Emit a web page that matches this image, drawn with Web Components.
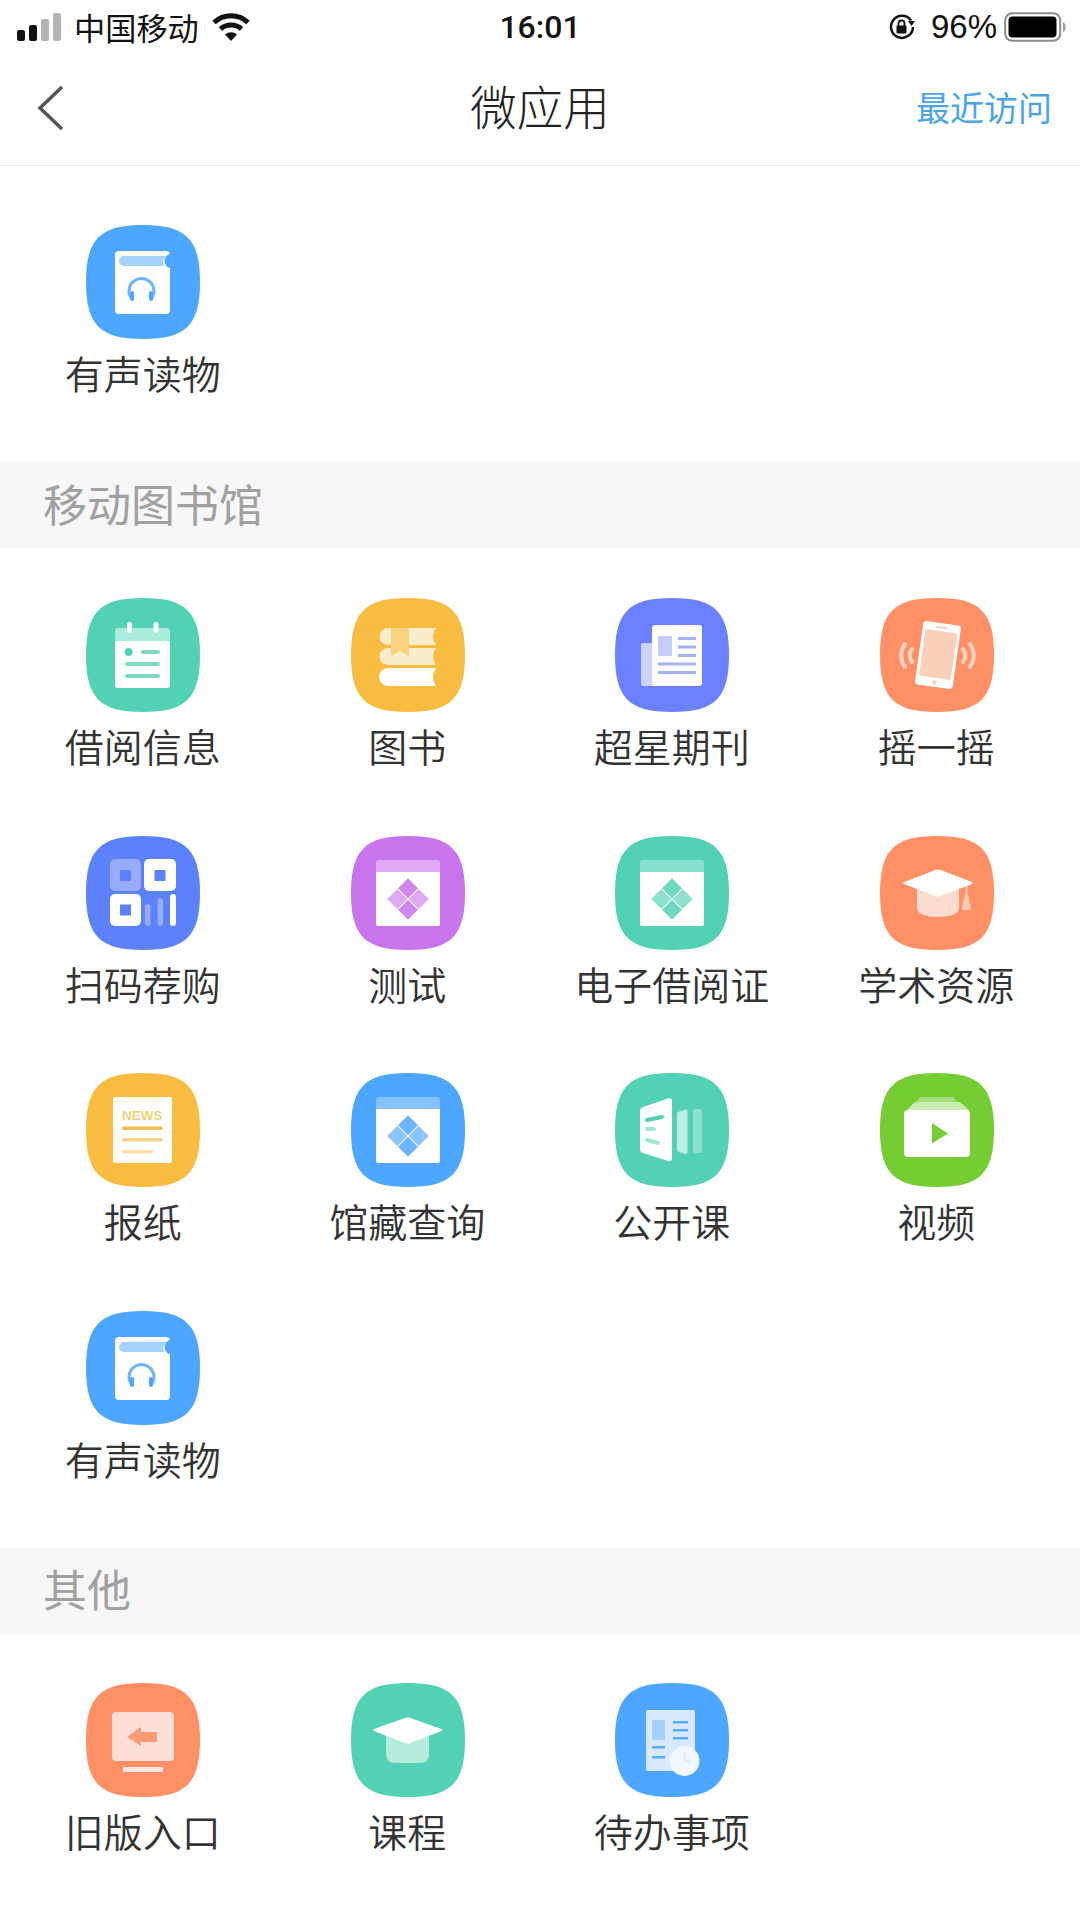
<!DOCTYPE html>
<html lang="zh">
<head>
<meta charset="utf-8">
<title>微应用</title>
<style>
  html, body { margin: 0; padding: 0; background: #fff; }
  body { width: 1080px; font-family: "Noto Sans CJK SC", "Noto Sans", sans-serif; }
</style>
</head>
<body>
<phone-status-bar carrier="中国移动" time="16:01" battery="96%"></phone-status-bar>
<nav-bar heading="微应用" action="最近访问"></nav-bar>

<tile-grid first>
  <app-tile icon="audio">有声读物</app-tile>
</tile-grid>

<section-title>移动图书馆</section-title>
<tile-grid>
  <app-tile icon="calendar">借阅信息</app-tile>
  <app-tile icon="books">图书</app-tile>
  <app-tile icon="journal">超星期刊</app-tile>
  <app-tile icon="shake">摇一摇</app-tile>
  <app-tile icon="qr">扫码荐购</app-tile>
  <app-tile icon="windowPurple">测试</app-tile>
  <app-tile icon="windowTeal">电子借阅证</app-tile>
  <app-tile icon="academic">学术资源</app-tile>
  <app-tile icon="news">报纸</app-tile>
  <app-tile icon="windowBlue">馆藏查询</app-tile>
  <app-tile icon="open">公开课</app-tile>
  <app-tile icon="video">视频</app-tile>
  <app-tile icon="audio">有声读物</app-tile>
</tile-grid>

<section-title>其他</section-title>
<tile-grid>
  <app-tile icon="legacy">旧版入口</app-tile>
  <app-tile icon="course">课程</app-tile>
  <app-tile icon="todo">待办事项</app-tile>
</tile-grid>

<script>
const BLUE = '#4da6ff'
const TEAL = '#52d1b4'
const YELLOW = '#f8bc41'
const INDIGO = '#6b80ff'
const ORANGE = '#ff8f65'
const ROYAL = '#5b82fb'
const PURPLE = '#c874ec'
const GREEN = '#76cc33'

const diamond = (cx, cy, fill) =>
  `<path d="M${cx} ${cy - 10}l10 10-10 10-10-10z" fill="${fill}"/>`

// app window with a four part diamond, used three times in different colours
const windowIcon = (base, band, dark, light) => ({
  color: base,
  art: `
    <path d="M25 36V27a3 3 0 0 1 3-3h58a3 3 0 0 1 3 3v9z" fill="${band}"/>
    <path d="M25 36h64v52a2 2 0 0 1-2 2H27a2 2 0 0 1-2-2z" fill="#fff"/>
    ${diamond(57, 52.3, dark)}
    ${diamond(57, 73.7, dark)}
    ${diamond(46.3, 63, light)}
    ${diamond(67.7, 63, light)}`
})

const ICONS = {
  audio: {
    color: BLUE,
    art: `
      <rect x="29" y="26" width="55" height="63" rx="4" fill="#fff"/>
      <circle cx="86" cy="36" r="7.500" fill="${BLUE}"/>
      <path d="M38 31h42l-3 5 1 5H38a5 5 0 0 1 0-10z" fill="#a5d2ff"/>
      <path d="M46 74a12.500 12.500 0 1 1 19 0" fill="none" stroke="#6fb6ff" stroke-width="3"/>
      <rect x="44" y="66" width="4" height="10" rx="2" fill="#4da6ff"/>
      <rect x="63" y="66" width="4" height="10" rx="2" fill="#4da6ff"/>`
  },
  calendar: {
    color: TEAL,
    art: `
      <path d="M29 43V33a3 3 0 0 1 3-3h49a3 3 0 0 1 3 3v10z" fill="#a8ecdb"/>
      <path d="M29 43h55v44a3 3 0 0 1-3 3H32a3 3 0 0 1-3-3z" fill="#fff"/>
      <rect x="41" y="24" width="5" height="11" rx="2.500" fill="#fff"/>
      <rect x="67.500" y="24" width="5" height="11" rx="2.500" fill="#fff"/>
      <circle cx="42.500" cy="54" r="4" fill="${TEAL}"/>
      <rect x="55" y="52" width="19" height="4" rx="2" fill="#7fd9c2"/>
      <rect x="39" y="64" width="35" height="4" rx="2" fill="#7fd9c2"/>
      <rect x="39" y="76" width="35" height="4" rx="2" fill="#7fd9c2"/>`
  },
  books: {
    color: YELLOW,
    art: `
      <path d="M37 30h48q-6 8.500 0 17H37a8.500 8.500 0 0 1 0-17z" fill="#fbeccb"/>
      <path d="M37 50h48q-6 8.500 0 17H37a8.500 8.500 0 0 1 0-17z" fill="#fbeccb"/>
      <path d="M37 70h48q-6 9 0 18H37a9 9 0 0 1 0-18z" fill="#fff"/>
      <path d="M40 30h18v28l-9-5-9 5z" fill="#f9d27f"/>`
  },
  journal: {
    color: INDIGO,
    art: `
      <rect x="26" y="45" width="14" height="43" rx="2" fill="#ccd3ff"/>
      <rect x="37" y="27" width="50" height="61" rx="3" fill="#fff"/>
      <rect x="43" y="38" width="14" height="20" fill="#c5cdfc"/>
      <rect x="63" y="39" width="18" height="3" fill="#a5b0f5"/>
      <rect x="63" y="47.500" width="18" height="3" fill="#a5b0f5"/>
      <rect x="63" y="56" width="18" height="3" fill="#a5b0f5"/>
      <rect x="43" y="64.500" width="38" height="3" fill="#a5b0f5"/>
      <rect x="43" y="73" width="38" height="3" fill="#a5b0f5"/>`
  },
  shake: {
    color: ORANGE,
    art: `
      <g transform="rotate(8 58 57)">
        <rect x="39" y="25" width="38" height="64" rx="3" fill="#fff"/>
        <rect x="42" y="33" width="32" height="47" fill="#fbd0bb"/>
        <rect x="52" y="28.500" width="12" height="1.500" fill="#f9c9b2"/>
        <circle cx="58" cy="84.500" r="2" fill="#f9c9b2"/>
      </g>
      <g fill="none" stroke="#fcd3bf" stroke-linecap="round" stroke-width="4">
        <path d="M25 46c-5 7-5 16 0 23"/>
        <path d="M32 51c-3 4-3 9 0 13"/>
        <path d="M90 46c5 7 5 16 0 23"/>
        <path d="M83 51c3 4 3 9 0 13"/>
      </g>`
  },
  qr: {
    color: ROYAL,
    art: `
      <rect x="24" y="23" width="31" height="32" rx="5" fill="#98aafc"/>
      <rect x="34" y="34" width="11" height="11" fill="${ROYAL}"/>
      <rect x="58" y="23" width="32" height="32" rx="5" fill="#fff"/>
      <rect x="68.500" y="34" width="11" height="11" fill="${ROYAL}"/>
      <rect x="24" y="58" width="31" height="32" rx="5" fill="#fff"/>
      <rect x="34" y="68.500" width="11" height="11" fill="${ROYAL}"/>
      <rect x="59" y="68" width="5.500" height="22" rx="2.700" fill="#98aafc"/>
      <rect x="71.500" y="62" width="5.500" height="28" rx="2.700" fill="#98aafc"/>
      <rect x="84" y="58" width="6" height="32" rx="3" fill="#fff"/>`
  },
  windowPurple: windowIcon(PURPLE, '#dfa9f5', '#cf86ee', '#dcaaf3'),
  windowTeal: windowIcon(TEAL, '#88e2cd', '#6fd9c0', '#8ee2cd'),
  windowBlue: windowIcon(BLUE, '#85c2ff', '#6db5fe', '#8cc4ff'),
  academic: {
    color: ORANGE,
    art: `
      <path d="M37 52h42v20c0 6-9 9-21 9s-21-3-21-9z" fill="#fcdccf"/>
      <path d="M56 33.800q2-.8 4 0l32 12.300q2 .9 0 1.800l-32 12.300q-2 .8-4 0L24 47.900q-2-.9 0-1.800z" fill="#fff"/>
      <rect x="85.500" y="50" width="2" height="10" fill="#fcc9b5"/>
      <path d="M85 58h3l3 14a1.500 1.500 0 0 1-1.500 2h-6A1.500 1.500 0 0 1 82 72z" fill="#fcc9b5"/>`
  },
  news: {
    color: YELLOW,
    art: `
      <rect x="27" y="24" width="59" height="66" rx="2" fill="#fff"/>
      <text x="36" y="47" font-family="'Liberation Sans', sans-serif" font-weight="700" font-size="13.500" fill="#f5cf7a">NEWS</text>
      <rect x="36" y="53.500" width="41" height="3.500" rx="1.700" fill="#f6bd50"/>
      <rect x="36" y="65" width="41" height="3.500" rx="1.700" fill="#f8d08a"/>
      <rect x="36" y="77" width="31" height="3.500" rx="1.700" fill="#fadca6"/>`
  },
  open: {
    color: TEAL,
    art: `
      <path d="M28 34l25-8.500q4-1 4 3V85q0 4-4 3l-25-8q-3-1-3-4V38q0-3 3-4z" fill="#fff"/>
      <path d="M32 47l15-3" stroke="${TEAL}" stroke-width="4" stroke-linecap="round" fill="none"/>
      <path d="M32 56h7" stroke="#a3e6d5" stroke-width="4" stroke-linecap="round" fill="none"/>
      <path d="M32 67l11 3" stroke="#a3e6d5" stroke-width="4" stroke-linecap="round" fill="none"/>
      <path d="M62 41q0-2 2-2.500l6-2q2.500-.5 2.500 2V79q0 2.500-2.500 2l-6-2q-2-.5-2-2.500z" fill="#bcefe2"/>
      <path d="M78 38q0-2 2-2h5q2 0 2 2v40q0 2-2 2h-5q-2 0-2-2z" fill="#8fe0cc"/>`
  },
  video: {
    color: GREEN,
    art: `
      <path d="M38 27q.5-3 3-3h31q2.500 0 3 3l5 4H34z" fill="#a5dd7c"/>
      <path d="M26 38l9-9h45l10 9z" fill="#c9ecb0"/>
      <rect x="24" y="37" width="66" height="47" rx="4" fill="#fff"/>
      <path d="M52 50l16 10.500-16 10z" fill="${GREEN}"/>`
  },
  legacy: {
    color: ORANGE,
    art: `
      <rect x="26" y="29" width="62" height="49" rx="4" fill="#fde0d5"/>
      <path d="M41 54l14-10v5h16v10H55v4z" fill="#fc9a75"/>
      <rect x="37" y="84" width="40" height="5" rx="1" fill="#fde9e1"/>`
  },
  course: {
    color: TEAL,
    art: `
      <path d="M35 50h43v21q0 9-9 9H44q-9 0-9-9z" fill="#b5ecdd"/>
      <path d="M54.500 34.800q2-1 4 0l32 11.300q2 .9 0 1.800l-32 12.300q-2 .8-4 0L23 47.900q-2-.9 0-1.800z" fill="#fff"/>`
  },
  todo: {
    color: BLUE,
    art: `
      <rect x="31" y="27" width="49" height="61" rx="2" fill="#d6e9ff"/>
      <rect x="37" y="37" width="13" height="20" rx="1" fill="#a6d1fd"/>
      <rect x="58" y="38" width="15" height="2.500" fill="#5aaeff"/>
      <rect x="58" y="46" width="15" height="2.500" fill="#5aaeff"/>
      <rect x="58" y="54" width="15" height="2.500" fill="#5aaeff"/>
      <rect x="37" y="63" width="13" height="2.500" fill="#5aaeff"/>
      <rect x="37" y="73" width="13" height="2.500" fill="#5aaeff"/>
      <circle cx="69.500" cy="78" r="15" fill="#f1f8ff"/>
      <path d="M69.500 70v8.500h6" fill="none" stroke="#cfe5fb" stroke-width="1.500"/>`
  }
}

class PhoneStatusBar extends HTMLElement {
  connectedCallback() {
    this.attachShadow({ mode: 'open' })
    this.shadowRoot.innerHTML = /*html*/ `
      <style>
        :host {
          display: grid;
          grid-template-columns: 1fr auto 1fr;
          align-items: center;
          height: 50px;
          padding: 2px 14px 0 17px;
          box-sizing: border-box;
          color: #111;
        }
        .left, .right { display: flex; align-items: center; }
        .right { justify-content: flex-end; }
        .carrier { font-size: 31.200px; margin-left: 11px; line-height: 50px; }
        .wifi { margin-left: 13px; }
        .time { font: 500 32px "Roboto", "Liberation Sans", sans-serif; margin-left: -3px; }
        .pct { font: 400 33px "Liberation Sans", sans-serif; margin: 0 7px 0 14px; }
        svg { display: block; }
      </style>
      <div class="left">
        <svg width="46" height="28" viewBox="0 0 46 28">
          <rect x="0" y="17" width="8" height="11" rx="2" fill="#111"/>
          <rect x="12" y="12" width="8" height="16" rx="2" fill="#111"/>
          <rect x="24" y="6" width="8" height="22" rx="2" fill="#b4b4b4"/>
          <rect x="36" y="0" width="8" height="28" rx="2" fill="#b4b4b4"/>
        </svg>
        <span class="carrier">${this.getAttribute('carrier')}</span>
        <svg class="wifi" width="38" height="30" viewBox="0 0 38 30">
          <path d="M2 10.500a25 25 0 0 1 34 0" fill="none" stroke="#111" stroke-width="5"/>
          <path d="M8.500 17a16 16 0 0 1 21 0" fill="none" stroke="#111" stroke-width="5"/>
          <path d="M13 22.500a9 9 0 0 1 12 0L19 29z" fill="#111"/>
        </svg>
      </div>
      <span class="time">${this.getAttribute('time')}</span>
      <div class="right">
        <svg width="30" height="26" viewBox="0 0 30 26">
          <path d="M24 6.500A11 11 0 1 0 26 13" fill="none" stroke="#111" stroke-width="2.500"/>
          <path d="M21 7h7l-3.500 5z" fill="#111"/>
          <rect x="9.500" y="11.500" width="10" height="8" rx="1" fill="#111"/>
          <path d="M11.500 12V9.500a3 3 0 0 1 6 0V12" fill="none" stroke="#111" stroke-width="1.800"/>
        </svg>
        <span class="pct">${this.getAttribute('battery')}</span>
        <svg width="62" height="30" viewBox="0 0 62 30">
          <rect x="1.200" y="1.200" width="55" height="27.600" rx="7" fill="none" stroke="#8c8c8c" stroke-width="2"/>
          <rect x="4.500" y="4.500" width="48" height="21" rx="4" fill="#000"/>
          <path d="M59 10c2 1 2.500 3 2.500 5s-.5 4-2.500 5z" fill="#9a9a9a"/>
        </svg>
      </div>`
  }
}

class NavBar extends HTMLElement {
  connectedCallback() {
    this.attachShadow({ mode: 'open' })
    this.shadowRoot.innerHTML = /*html*/ `
      <style>
        :host {
          display: grid;
          grid-template-columns: 1fr auto 1fr;
          align-items: center;
          height: 116px;
          padding: 0 28px;
          box-sizing: border-box;
          border-bottom: 1px solid #e8e8e8;
        }
        svg { display: block; margin-left: 8px; }
        h1 { margin: 0 0 5px; font-size: 46.500px; font-weight: 300; color: #222; line-height: 106px; }
        a { justify-self: end; font-size: 34px; color: #4aa5e8; margin-bottom: 3px; }
      </style>
      <svg width="28" height="46" viewBox="0 0 28 46">
        <path d="M26 2L4 23l22 21" fill="none" stroke="#555" stroke-width="3.500"/>
      </svg>
      <h1>${this.getAttribute('heading')}</h1>
      <a>${this.getAttribute('action')}</a>`
  }
}

class SectionTitle extends HTMLElement {
  connectedCallback() {
    this.attachShadow({ mode: 'open' })
    this.shadowRoot.innerHTML = /*html*/ `
      <style>
        :host {
          display: block;
          height: 85px;
          line-height: 80px;
          padding-left: 43px;
          background: #f7f7f7;
          color: #a0a0a0;
          font-size: 44px;
        }
      </style>
      <slot></slot>`
  }
}

class TileGrid extends HTMLElement {
  connectedCallback() {
    this.attachShadow({ mode: 'open' })
    this.shadowRoot.innerHTML = /*html*/ `
      <style>
        :host {
          display: grid;
          grid-template-columns: repeat(4, 1fr);
          row-gap: 63.600px;
          padding: 50px 11px 63px 11px;
        }
        :host([first]) { padding-top: 59px; padding-bottom: 64px; }
      </style>
      <slot></slot>`
  }
}

class AppTile extends HTMLElement {
  connectedCallback() {
    const icon = ICONS[this.getAttribute('icon')]
    this.attachShadow({ mode: 'open' })
    this.shadowRoot.innerHTML = /*html*/ `
      <style>
        :host {
          display: flex;
          flex-direction: column;
          align-items: center;
          height: 174px;
        }
        svg { display: block; }
        .label {
          margin-top: 10px;
          margin-right: 1px;
          font-size: 39px;
          font-weight: 350;
          line-height: 46px;
          color: #333;
          white-space: nowrap;
        }
      </style>
      <svg width="114" height="114" viewBox="0 0 114 114">
        <path d="M57 0C100 0 114 14 114 57C114 100 100 114 57 114C14 114 0 100 0 57C0 14 14 0 57 0Z" fill="${icon.color}"/>
        ${icon.art}
      </svg>
      <span class="label"><slot></slot></span>`
  }
}

customElements.define('phone-status-bar', PhoneStatusBar)
customElements.define('nav-bar', NavBar)
customElements.define('section-title', SectionTitle)
customElements.define('tile-grid', TileGrid)
customElements.define('app-tile', AppTile)
</script>
</body>
</html>
